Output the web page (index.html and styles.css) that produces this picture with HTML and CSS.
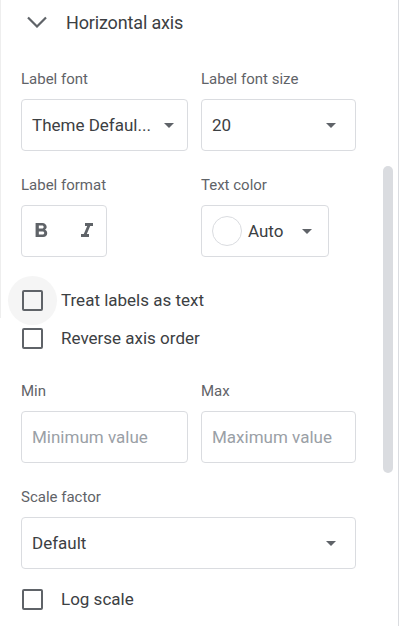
FILE: index.html
```html
<!DOCTYPE html>
<html lang="en">
<head>
<meta charset="utf-8">
<title>Horizontal axis</title>
<link rel="stylesheet" href="styles.css">
</head>
<body>
<div class="panel">
  <div class="header">
    <svg class="chev" width="20" height="12" viewBox="0 0 20 12"><polyline points="1,1.5 10,10.5 19,1.5" fill="none" stroke="#5f6368" stroke-width="2.2"/></svg>
    <span class="title">Horizontal axis</span>
  </div>

  <div class="grid sec">
    <div class="field">
      <div class="label">Label font</div>
      <div class="box select pad-a"><span class="val">Theme Defaul...</span><span class="arrow"></span></div>
    </div>
    <div class="field">
      <div class="label">Label font size</div>
      <div class="box select pad-b"><span class="val">20</span><span class="arrow"></span></div>
    </div>
  </div>

  <div class="grid sec">
    <div class="field">
      <div class="label">Label format</div>
      <div class="box fmt">
        <svg class="bold" width="26" height="24" viewBox="0 0 24 24" preserveAspectRatio="none"><path fill="#5f6368" d="M15.6 10.79c.97-.67 1.65-1.77 1.65-2.79 0-2.26-1.75-4-4-4H7v14h7.04c2.09 0 3.71-1.7 3.71-3.79 0-1.52-.86-2.82-2.1-3.42zM10 6.5h3c.83 0 1.5.67 1.5 1.5s-.67 1.5-1.5 1.5h-3v-3zm3.5 9H10v-3h3.5c.83 0 1.5.67 1.5 1.5s-.67 1.5-1.5 1.5z"/></svg>
        <svg width="24" height="24" viewBox="0 0 24 24"><path fill="#5f6368" d="M10 4v3h2.21l-3.42 8H6v3h8v-3h-2.21l3.42-8H18V4z"/></svg>
      </div>
    </div>
    <div class="field">
      <div class="label">Text color</div>
      <div class="box color">
        <span class="swatch"></span><span class="val">Auto</span><span class="arrow"></span>
      </div>
    </div>
  </div>

  <div class="checks sec">
    <div class="check"><span class="cb hover"></span><span class="ctext">Treat labels as text</span></div>
    <div class="check"><span class="cb"></span><span class="ctext">Reverse axis order</span></div>
  </div>

  <div class="grid sec">
    <div class="field">
      <div class="label">Min</div>
      <div class="box input"><span class="ph">Minimum value</span></div>
    </div>
    <div class="field">
      <div class="label">Max</div>
      <div class="box input"><span class="ph">Maximum value</span></div>
    </div>
  </div>

  <div class="sec">
    <div class="label">Scale factor</div>
    <div class="box select pad-b wide"><span class="val">Default</span><span class="arrow"></span></div>
  </div>

  <div class="checks sec-small">
    <div class="check"><span class="cb"></span><span class="ctext">Log scale</span></div>
  </div>

  <div class="thumb"></div>
</div>
</body>
</html>
```

FILE: styles.css
```css
html, body {
  margin: 0;
  padding: 0;
  background: #ffffff;
}
body {
  font-family: Roboto, "Liberation Sans", sans-serif;
  width: 400px;
  height: 626px;
  overflow: hidden;
}
.panel {
  position: relative;
  width: 377px;
  height: 626px;
  padding-left: 21px;
  border-right: 1px solid #dadce0;
  box-sizing: content-box;
}
.panel::before {
  content: "";
  position: absolute;
  left: 0;
  top: 0;
  width: 1px;
  height: 318px;
  background: #eeeeee;
}
.header {
  height: 45px;
  display: flex;
  align-items: center;
  margin-left: -21px;
  padding-left: 27px;
}
.chev {
  display: block;
  margin-top: -1px;
}
.title {
  margin-left: 19px;
  font-size: 18px;
  color: #3c4043;
  letter-spacing: -0.15px;
}
.sec {
  margin-top: 24px;
}
.sec-small {
  margin-top: 11px;
}
.grid {
  display: grid;
  grid-template-columns: 167px 155px;
  column-gap: 13px;
}
.label {
  font-size: 15px;
  line-height: 20px;
  color: #5f6368;
  margin-bottom: 10px;
}
.box {
  box-sizing: border-box;
  height: 52px;
  border: 1px solid #dadce0;
  border-radius: 4px;
  display: flex;
  align-items: center;
}
.select {
  padding-left: 10px;
}
.pad-a { padding-right: 13px; }
.pad-b { padding-right: 19px; }
.wide { width: 335px; }
.val {
  flex: 1;
  font-size: 17px;
  color: #3c4043;
  white-space: nowrap;
}
.arrow {
  width: 0;
  height: 0;
  border-left: 5px solid transparent;
  border-right: 5px solid transparent;
  border-top: 5px solid #5f6368;
  flex: none;
}
.fmt {
  width: 86px;
  padding-left: 6px;
  gap: 21px;
}
.fmt svg { display: block; }
.color {
  width: 128px;
  padding-left: 10px;
  padding-right: 16px;
}
.swatch {
  width: 30px;
  height: 30px;
  box-sizing: border-box;
  border: 1px solid #dadce0;
  border-radius: 50%;
  background: #ffffff;
  margin-right: 6px;
  flex: none;
}
.color .val { flex: 1; }
.input {
  padding-left: 10px;
}
.ph {
  font-size: 17px;
  color: #9aa0a6;
  white-space: nowrap;
}
.check {
  height: 38px;
  display: flex;
  align-items: center;
}
.cb {
  position: relative;
  width: 21px;
  height: 21px;
  box-sizing: border-box;
  border: 2px solid #5f6368;
  border-radius: 2px;
  margin-left: 1px;
  flex: none;
}
.cb.hover::before {
  content: "";
  position: absolute;
  left: -16px;
  top: -16px;
  width: 49px;
  height: 49px;
  border-radius: 50%;
  background: #f5f5f5;
  z-index: -1;
}
.ctext {
  margin-left: 18px;
  font-size: 17px;
  color: #3c4043;
}
.checks { position: relative; z-index: 0; }
.thumb {
  position: absolute;
  left: 383px;
  top: 166px;
  width: 10px;
  height: 307px;
  border-radius: 5px;
  background: #dadce0;
}
```
